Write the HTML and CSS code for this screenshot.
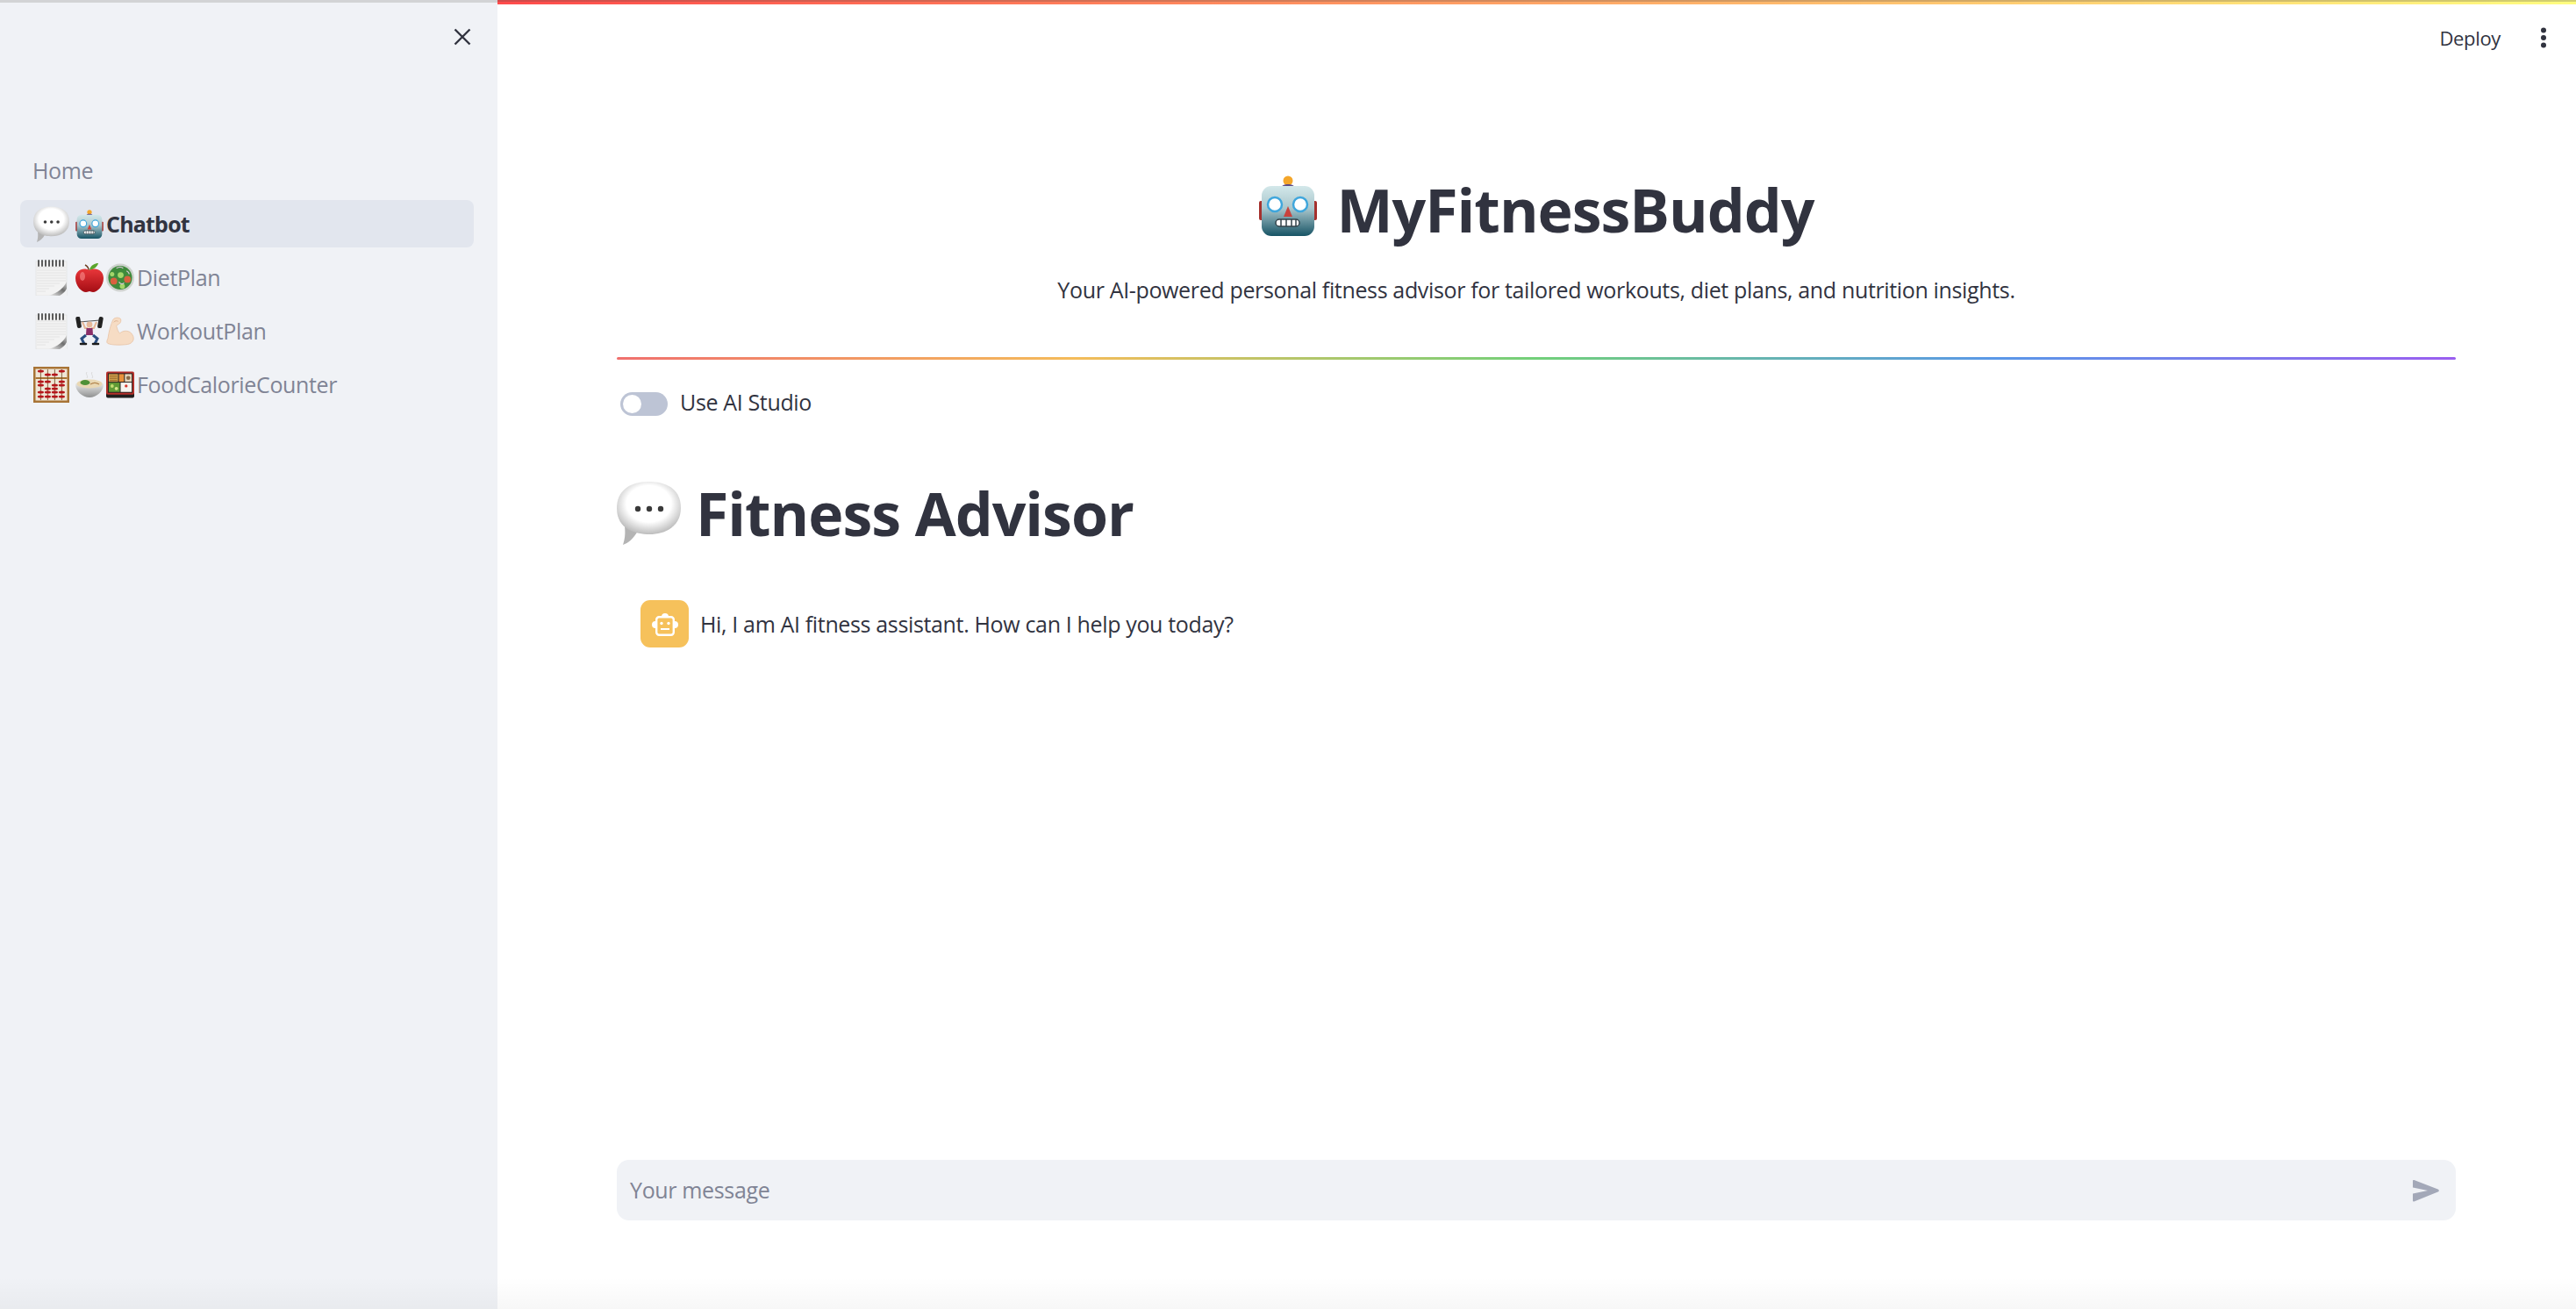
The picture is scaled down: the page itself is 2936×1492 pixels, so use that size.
FILE: index.html
```html
<!DOCTYPE html>
<html>
<head>
    <title>MyFitnessBuddy</title>
    <link rel="stylesheet" href="styles.css">
</head>
<body>
    <svg class="sprites" xmlns="http://www.w3.org/2000/svg">
        <defs>
            <radialGradient id="bubbleFill" cx="50%" cy="42%" r="58%">
                <stop offset="0.6" stop-color="#ffffff"/>
                <stop offset="1" stop-color="#bdbdbd"/>
            </radialGradient>
            <linearGradient id="robotFill" x1="0" y1="0" x2="0" y2="1">
                <stop offset="0" stop-color="#d3e8ea"/>
                <stop offset="0.45" stop-color="#a9c6cc"/>
                <stop offset="1" stop-color="#175465"/>
            </linearGradient>
            <linearGradient id="appleFill" x1="0" y1="0" x2="0" y2="1">
                <stop offset="0" stop-color="#e9373a"/>
                <stop offset="1" stop-color="#a40d14"/>
            </linearGradient>
            <linearGradient id="bowlFill" x1="0" y1="0" x2="0" y2="1">
                <stop offset="0" stop-color="#f4f4f4"/>
                <stop offset="1" stop-color="#8f9191"/>
            </linearGradient>
            <linearGradient id="curlFill" x1="0" y1="1" x2="1" y2="0">
                <stop offset="0" stop-color="#f4f4f4"/>
                <stop offset="0.6" stop-color="#6f6f6f"/>
                <stop offset="1" stop-color="#d8d8d8"/>
            </linearGradient>
        </defs>
        <symbol id="e-bubble" viewBox="0 0 73 73">
            <path d="M9 52C10 61 9 67 7 73C13 71 19 66 24 57Z" fill="#b4b4b4"/>
            <path d="M36 1C60 1 73 12 73 31C73 50 58 61 37 61C22 61 0 56 0 31C0 12 14 1 36 1Z" fill="url(#bubbleFill)"/>
            <circle cx="24" cy="32" r="3.2" fill="#3a3a3a"/>
            <circle cx="37" cy="32" r="3.2" fill="#3a3a3a"/>
            <circle cx="50" cy="32" r="3.2" fill="#3a3a3a"/>
        </symbol>
        <symbol id="e-robot" viewBox="0 0 66 69">
            <rect x="0" y="29" width="6" height="22" rx="2" fill="#a5302d"/>
            <rect x="60" y="29" width="6" height="22" rx="2" fill="#a5302d"/>
            <circle cx="33" cy="6" r="5.5" fill="#f4a62a"/>
            <path d="M26 13C26 9 40 9 40 13C40 16 37 17 33 17C29 17 26 16 26 13Z" fill="#5c4a86"/>
            <rect x="3" y="12" width="60" height="57" rx="11" fill="url(#robotFill)"/>
            <circle cx="18" cy="33" r="8" fill="#ffffff" stroke="#3fa6dc" stroke-width="2.5"/>
            <circle cx="47" cy="33" r="8" fill="#ffffff" stroke="#3fa6dc" stroke-width="2.5"/>
            <path d="M33 35L38 47H28Z" fill="#c9423d"/>
            <rect x="19" y="50" width="27" height="8" rx="4" fill="#ffffff" stroke="#33434a" stroke-width="1.5"/>
            <path d="M25 50v8M31 50v8M37 50v8M42 50v8" stroke="#33434a" stroke-width="1.5"/>
        </symbol>
        <symbol id="e-notepad" viewBox="0 0 41 41">
            <rect x="3" y="2" width="35" height="39" fill="#f3f3f3" stroke="#dcdcdc" stroke-width="0.6"/>
            <path d="M4 9H37M4 12H37M4 15H37M4 18H37M4 21H37M4 24H37M4 27H30M4 30H24M4 33H18M4 36H14" stroke="#dadada" stroke-width="0.6"/>
            <path d="M6 1v6M10 1v6M14 1v6M18 1v6M22 1v6M26 1v6M30 1v6M34 1v6" stroke="#4c4c4c" stroke-width="1.8" stroke-linecap="round"/>
            <path d="M38 25C35 32 28 38 17 41H38Z" fill="url(#curlFill)"/>
            <path d="M38 33C36 37 33 39 30 41H38Z" fill="#f1f2f4"/>
        </symbol>
        <symbol id="e-apple" viewBox="0 0 32 33">
            <path d="M16 7C18 2 22 0 26 0C25 4 21 7 16 8Z" fill="#5aa52c"/>
            <path d="M15 8C15 5 13 3 11 2" stroke="#6b3d20" stroke-width="1.4" fill="none"/>
            <path d="M16 8C23 4 32 8 32 17C32 26 25 33 20 33C18 33 17 32 16 32C15 32 14 33 12 33C7 33 0 26 0 17C0 8 9 4 16 8Z" fill="url(#appleFill)"/>
            <ellipse cx="8" cy="15" rx="3" ry="5" fill="#f58080" opacity="0.7"/>
        </symbol>
        <symbol id="e-salad" viewBox="0 0 33 34">
            <circle cx="16.5" cy="17" r="16.5" fill="#cfd3cf"/>
            <circle cx="16.5" cy="17" r="14" fill="#3f8b3c"/>
            <circle cx="9" cy="21" r="4" fill="#d9613f"/>
            <circle cx="25" cy="19" r="4" fill="#d9613f"/>
            <circle cx="17" cy="14" r="3.5" fill="#a5d66a"/>
            <circle cx="7" cy="13" r="2.6" fill="#a5d66a"/>
            <circle cx="19" cy="27" r="3" fill="#a5d66a"/>
            <path d="M12 6c3-2 6-2 8 0M15 22c2 3 5 3 6 1M24 9c2 1 3 3 3 4" stroke="#d9c6d8" stroke-width="1.2" fill="none"/>
        </symbol>
        <symbol id="e-lifter" viewBox="0 0 32 33">
            <path d="M4 6L28 4" stroke="#555" stroke-width="1.2"/>
            <rect x="1" y="0" width="5" height="13" rx="2" fill="#222" transform="rotate(-10 3 6)"/>
            <rect x="26" y="0" width="5" height="13" rx="2" fill="#222" transform="rotate(10 28 6)"/>
            <path d="M8 6L11 13H14M24 6L21 13H18" stroke="#e6b99a" stroke-width="2.2" fill="none"/>
            <circle cx="16" cy="9" r="3.4" fill="#e6b99a"/>
            <path d="M12.5 13H19.5L20 21H12Z" fill="#8a2f68"/>
            <path d="M12 21L7 25L10 31M20 21L25 25L22 31" stroke="#2c4f80" stroke-width="3" fill="none"/>
            <path d="M6 31H12M20 31H26" stroke="#1c1c1c" stroke-width="2.6" stroke-linecap="round"/>
        </symbol>
        <symbol id="e-arm" viewBox="0 0 33 33">
            <path d="M8 3C10 0 15 0 17 2C18 4 17 7 15 8L12 10C13 14 14 17 16 19C20 15 28 15 31 21C34 26 31 31 25 32C17 33 7 33 2 31C0 30 1 27 2 25C3 18 5 10 8 3Z" fill="#f6dcc4" stroke="#e6c2a4" stroke-width="0.8"/>
            <path d="M9 6C10 4 13 4 14 5" stroke="#dcb494" stroke-width="1" fill="none"/>
        </symbol>
        <symbol id="e-abacus" viewBox="0 0 41 41">
            <rect x="0" y="0" width="41" height="41" fill="#a87436"/>
            <rect x="2.5" y="2.5" width="36" height="36" fill="#efe6d6"/>
            <rect x="2.5" y="12" width="36" height="2" fill="#a87436"/>
            <path d="M8.4 3V38M16.4 3V38M24.4 3V38M32.4 3V38" stroke="#6e4a20" stroke-width="0.8"/>
            <g fill="#b5161b">
                <ellipse cx="8.4" cy="5" rx="3.6" ry="1.6"/>
                <ellipse cx="16.4" cy="9" rx="3.6" ry="1.6"/>
                <ellipse cx="24.4" cy="9" rx="3.6" ry="1.6"/>
                <ellipse cx="32.4" cy="5" rx="3.6" ry="1.6"/>
                <ellipse cx="8.4" cy="17" rx="3.6" ry="1.6"/>
                <ellipse cx="8.4" cy="21" rx="3.6" ry="1.6"/>
                <ellipse cx="8.4" cy="29" rx="3.6" ry="1.6"/>
                <ellipse cx="8.4" cy="34" rx="3.6" ry="1.6"/>
                <ellipse cx="16.4" cy="17" rx="3.6" ry="1.6"/>
                <ellipse cx="16.4" cy="25" rx="3.6" ry="1.6"/>
                <ellipse cx="16.4" cy="29" rx="3.6" ry="1.6"/>
                <ellipse cx="16.4" cy="34" rx="3.6" ry="1.6"/>
                <ellipse cx="24.4" cy="21" rx="3.6" ry="1.6"/>
                <ellipse cx="24.4" cy="25" rx="3.6" ry="1.6"/>
                <ellipse cx="24.4" cy="29" rx="3.6" ry="1.6"/>
                <ellipse cx="24.4" cy="34" rx="3.6" ry="1.6"/>
                <ellipse cx="32.4" cy="17" rx="3.6" ry="1.6"/>
                <ellipse cx="32.4" cy="21" rx="3.6" ry="1.6"/>
                <ellipse cx="32.4" cy="29" rx="3.6" ry="1.6"/>
                <ellipse cx="32.4" cy="34" rx="3.6" ry="1.6"/>
            </g>
        </symbol>
        <symbol id="e-ramen" viewBox="0 0 32 29">
            <path d="M13 0c-2 3 2 4 0 7M19 0c-2 3 2 4 0 7" stroke="#dcdcdc" stroke-width="1" fill="none"/>
            <path d="M0 14C0 10 32 10 32 14C32 22 24 29 16 29C8 29 0 22 0 14Z" fill="url(#bowlFill)"/>
            <ellipse cx="16" cy="13.5" rx="14.5" ry="5" fill="#e9d8b4"/>
            <ellipse cx="11" cy="12" rx="5.5" ry="3" fill="#4f9138"/>
            <path d="M17 14c3-2 7-2 10 0" stroke="#b28650" stroke-width="1.2" fill="none"/>
        </symbol>
        <symbol id="e-bento" viewBox="0 0 33 31">
            <rect x="0" y="5" width="33" height="26" rx="2" fill="#23201f"/>
            <rect x="0" y="0" width="33" height="27" rx="2" fill="#b5302a"/>
            <rect x="2" y="2" width="29" height="23" fill="#23201f"/>
            <rect x="3" y="3" width="11" height="9" fill="#d0a04e"/>
            <path d="M4 5.5H13M4 8H13M4 10.5H13" stroke="#8e5e25" stroke-width="0.9"/>
            <rect x="15" y="3" width="6" height="9" fill="#e8913c"/>
            <rect x="22" y="3" width="8" height="9" fill="#e7d8bd"/>
            <circle cx="26" cy="7.5" r="2.4" fill="#8a6a48"/>
            <rect x="3" y="13" width="13" height="11" fill="#5f9a35"/>
            <circle cx="7" cy="17" r="2" fill="#c2dc70"/>
            <circle cx="12" cy="20" r="2" fill="#d7e68a"/>
            <rect x="17" y="13" width="13" height="11" fill="#f7f5ef"/>
            <circle cx="23.5" cy="17" r="1.7" fill="#d6392f"/>
        </symbol>
    </svg>

    <div class="app">
        <aside class="sidebar">
            <div class="sidebar-head">
                <svg class="close-icon" viewBox="0 0 20 20"><path d="M1.5 1.5L18.5 18.5M18.5 1.5L1.5 18.5" stroke="#31333f" stroke-width="2.4" fill="none"/></svg>
            </div>
            <nav class="nav">
                <div class="nav-title">Home</div>
                <a class="nav-link active">
                    <svg class="emoji-lg"><use href="#e-bubble"/></svg>
                    <svg class="emoji-sm"><use href="#e-robot"/></svg>
                    <span>Chatbot</span>
                </a>
                <a class="nav-link">
                    <svg class="emoji-lg"><use href="#e-notepad"/></svg>
                    <svg class="emoji-sm"><use href="#e-apple"/></svg>
                    <svg class="emoji-sm"><use href="#e-salad"/></svg>
                    <span>DietPlan</span>
                </a>
                <a class="nav-link">
                    <svg class="emoji-lg"><use href="#e-notepad"/></svg>
                    <svg class="emoji-sm"><use href="#e-lifter"/></svg>
                    <svg class="emoji-sm"><use href="#e-arm"/></svg>
                    <span>WorkoutPlan</span>
                </a>
                <a class="nav-link">
                    <svg class="emoji-lg"><use href="#e-abacus"/></svg>
                    <svg class="emoji-sm"><use href="#e-ramen"/></svg>
                    <svg class="emoji-sm"><use href="#e-bento"/></svg>
                    <span>FoodCalorieCounter</span>
                </a>
            </nav>
        </aside>

        <main class="main">
            <div class="top-bar"></div>
            <header class="header">
                <span class="deploy">Deploy</span>
                <svg class="kebab" viewBox="0 0 8 24"><circle cx="4" cy="3.5" r="3"/><circle cx="4" cy="12" r="3"/><circle cx="4" cy="20.5" r="3"/></svg>
            </header>

            <section class="content">
                <h1 class="title"><svg class="title-emoji"><use href="#e-robot"/></svg>MyFitnessBuddy</h1>
                <p class="subtitle">Your AI-powered personal fitness advisor for tailored workouts, diet plans, and nutrition insights.</p>
                <div class="rainbow"></div>
                <label class="toggle-row">
                    <span class="toggle"><span class="knob"></span></span>
                    <span class="toggle-label">Use AI Studio</span>
                </label>
                <h1 class="heading"><svg class="heading-emoji"><use href="#e-bubble"/></svg>Fitness Advisor</h1>
                <div class="message">
                    <div class="avatar">
                        <svg viewBox="0 0 30 27" class="avatar-icon">
                            <path d="M11 5a4 4 0 0 1 8 0Z" fill="#fff"/>
                            <path d="M4 10a4 4 0 0 0 0 8ZM26 10a4 4 0 0 1 0 8Z" fill="#fff"/>
                            <rect x="5.2" y="5.2" width="19.6" height="20.6" rx="3" fill="none" stroke="#fff" stroke-width="2.4"/>
                            <circle cx="11" cy="12.5" r="1.7" fill="#fff"/>
                            <circle cx="19" cy="12.5" r="1.7" fill="#fff"/>
                            <rect x="10" y="18" width="10" height="2" fill="#fff"/>
                        </svg>
                    </div>
                    <div>Hi, I am AI fitness assistant. How can I help you today?</div>
                </div>
                <div class="spacer"></div>
                <div class="chat-input">
                    <span class="placeholder">Your message</span>
                    <svg class="send" viewBox="0 0 30 26"><path d="M1.5 1L28.6 11.4C30.2 12 30.2 14 28.6 14.6L1.5 25.4C0.8 25.7 0 25.2 0 24.4V16.6L17 13L0 9.5V1.8C0 1.1 0.8 0.7 1.5 1Z" fill="#a3a8b8"/></svg>
                </div>
            </section>
        </main>
        <div class="bottom-fade"></div>
    </div>
</body>
</html>
```

FILE: styles.css
```css
* {
    box-sizing: border-box;
}
html, body {
    margin: 0;
    height: 100%;
    overflow: hidden;
}
body {
    font-family: "Open Sans", "Noto Sans", sans-serif;
    font-size: 25px;
    letter-spacing: -0.35px;
    color: #31333f;
    background: #fff;
}
.sprites {
    position: absolute;
    width: 0;
    height: 0;
}
.app {
    position: relative;
    display: flex;
    height: 100vh;
}
.bottom-fade {
    position: absolute;
    left: 0;
    right: 0;
    bottom: 0;
    height: 36px;
    background: linear-gradient(to bottom, rgba(0, 0, 0, 0), rgba(0, 0, 0, 0.03));
}

/* sidebar */
.sidebar {
    width: 567px;
    flex-shrink: 0;
    background: #f0f2f6;
    border-top: 3px solid #d2d3d5;
}
.sidebar-head {
    display: flex;
    justify-content: flex-end;
    padding: 29px 30px 0 0;
}
.close-icon {
    width: 20px;
    height: 20px;
}
.nav {
    margin-top: 123px;
    padding: 0 27px 0 23px;
}
.nav-title {
    padding-left: 14px;
    color: #808495;
    height: 53px;
    line-height: 38px;
}
.nav-link {
    display: flex;
    align-items: center;
    gap: 3px;
    height: 54px;
    margin-bottom: 7px;
    padding-left: 15px;
    border-radius: 8px;
    color: #808495;
}
.nav-link.active {
    background: #e2e6ee;
    color: #31333f;
    font-weight: 700;
    letter-spacing: -0.8px;
}
.emoji-lg {
    width: 41px;
    height: 41px;
    margin-right: 4px;
}
.emoji-sm {
    width: 32px;
    height: 33px;
}

/* main */
.main {
    flex: 1;
    display: flex;
    flex-direction: column;
}
.top-bar {
    height: 5px;
    background: linear-gradient(to right, #ff4b4b, #fffd80);
    box-shadow: inset 0 2px 0 rgba(70, 70, 70, 0.25);
}
.header {
    display: flex;
    align-items: center;
    justify-content: flex-end;
    height: 76px;
    padding: 0 33px 0 0;
}
.deploy {
    font-size: 22px;
    margin-right: 45px;
}
.kebab {
    width: 8px;
    height: 24px;
    fill: #31333f;
}
.content {
    flex: 1;
    display: flex;
    flex-direction: column;
    padding: 0 137px 101px 136px;
}
.title {
    display: flex;
    align-items: center;
    justify-content: center;
    gap: 23px;
    margin: 114px 0 0;
    height: 88px;
    font-size: 68px;
    letter-spacing: -1px;
    line-height: 88px;
    font-weight: 700;
}
.title-emoji {
    width: 66px;
    height: 69px;
    margin-bottom: 9px;
}
.subtitle {
    margin: 28px 0 0;
    line-height: 38px;
    text-align: center;
}
.rainbow {
    height: 3px;
    margin-top: 58px;
    border-radius: 2px;
    background: linear-gradient(to right, #f0706e 0%, #f4bc5a 25%, #72d07a 50%, #5a98e8 75%, #9a5ef0 100%);
}
.toggle-row {
    display: flex;
    align-items: center;
    height: 40px;
    margin-top: 28px;
    padding-left: 4px;
}
.toggle-label {
    margin-left: 14px;
}
.toggle {
    position: relative;
    width: 54px;
    height: 27px;
    border-radius: 14px;
    background: #bdc4d5;
    margin-top: 4px;
}
.knob {
    position: absolute;
    left: 3px;
    top: 3px;
    width: 21px;
    height: 21px;
    border-radius: 50%;
    background: #fff;
}
.heading {
    display: flex;
    align-items: center;
    gap: 17px;
    margin: 62px 0 0;
    height: 88px;
    font-size: 68px;
    letter-spacing: -1px;
    font-weight: 700;
}
.heading-emoji {
    width: 73px;
    height: 73px;
}
.message {
    display: flex;
    align-items: center;
    gap: 13px;
    margin-top: 56px;
    padding-left: 27px;
}
.avatar {
    display: flex;
    align-items: center;
    justify-content: center;
    width: 55px;
    height: 54px;
    border-radius: 11px;
    background: #f6c15b;
}
.avatar-icon {
    width: 30px;
    height: 27px;
}
.spacer {
    flex: 1;
}
.chat-input {
    display: flex;
    align-items: center;
    justify-content: space-between;
    height: 69px;
    padding: 0 19px 0 15px;
    border-radius: 14px;
    background: #f0f2f6;
}
.placeholder {
    color: #808495;
    margin-bottom: 2px;
}
.send {
    width: 30px;
    height: 26px;
}
```
